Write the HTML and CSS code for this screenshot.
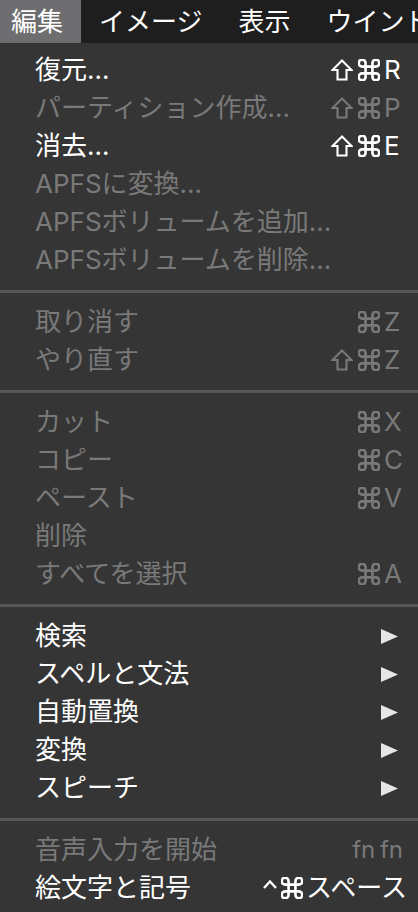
FILE: index.html
```html
<!DOCTYPE html>
<html lang="ja">
<head>
<meta charset="utf-8">
<title>編集メニュー</title>
<link rel="stylesheet" href="styles.css">
</head>
<body>
<div class="menubar">
  <div class="mb-item active">編集</div>
  <div class="mb-item">イメージ</div>
  <div class="mb-item">表示</div>
  <div class="mb-item">ウインドウ</div>
</div>

<div class="menu">
  <div class="row">
    <span class="label">復元…</span>
    <span class="keys">
      <svg class="shift" viewBox="0 0 22 22"><path d="M11 1.5 L20.5 11 H15.5 V20.5 H6.5 V11 H1.5 Z"/></svg>
      <svg class="cmd" viewBox="2.4 2.4 19.2 19.2"><path d="M15 6v12a3 3 0 1 0 3-3H6a3 3 0 1 0 3 3V6a3 3 0 1 0-3 3h12a3 3 0 1 0-3-3"/></svg>
      <span class="key">R</span>
    </span>
  </div>
  <div class="row off">
    <span class="label">パーティション作成…</span>
    <span class="keys">
      <svg class="shift" viewBox="0 0 22 22"><path d="M11 1.5 L20.5 11 H15.5 V20.5 H6.5 V11 H1.5 Z"/></svg>
      <svg class="cmd" viewBox="2.4 2.4 19.2 19.2"><path d="M15 6v12a3 3 0 1 0 3-3H6a3 3 0 1 0 3 3V6a3 3 0 1 0-3 3h12a3 3 0 1 0-3-3"/></svg>
      <span class="key">P</span>
    </span>
  </div>
  <div class="row">
    <span class="label">消去…</span>
    <span class="keys">
      <svg class="shift" viewBox="0 0 22 22"><path d="M11 1.5 L20.5 11 H15.5 V20.5 H6.5 V11 H1.5 Z"/></svg>
      <svg class="cmd" viewBox="2.4 2.4 19.2 19.2"><path d="M15 6v12a3 3 0 1 0 3-3H6a3 3 0 1 0 3 3V6a3 3 0 1 0-3 3h12a3 3 0 1 0-3-3"/></svg>
      <span class="key">E</span>
    </span>
  </div>
  <div class="row off"><span class="label">APFSに変換…</span></div>
  <div class="row off"><span class="label">APFSボリュームを追加…</span></div>
  <div class="row off"><span class="label">APFSボリュームを削除…</span></div>

  <div class="sep"></div>

  <div class="row off">
    <span class="label">取り消す</span>
    <span class="keys">
      <svg class="cmd" viewBox="2.4 2.4 19.2 19.2"><path d="M15 6v12a3 3 0 1 0 3-3H6a3 3 0 1 0 3 3V6a3 3 0 1 0-3 3h12a3 3 0 1 0-3-3"/></svg>
      <span class="key">Z</span>
    </span>
  </div>
  <div class="row off">
    <span class="label">やり直す</span>
    <span class="keys">
      <svg class="shift" viewBox="0 0 22 22"><path d="M11 1.5 L20.5 11 H15.5 V20.5 H6.5 V11 H1.5 Z"/></svg>
      <svg class="cmd" viewBox="2.4 2.4 19.2 19.2"><path d="M15 6v12a3 3 0 1 0 3-3H6a3 3 0 1 0 3 3V6a3 3 0 1 0-3 3h12a3 3 0 1 0-3-3"/></svg>
      <span class="key">Z</span>
    </span>
  </div>

  <div class="sep"></div>

  <div class="row off">
    <span class="label">カット</span>
    <span class="keys">
      <svg class="cmd" viewBox="2.4 2.4 19.2 19.2"><path d="M15 6v12a3 3 0 1 0 3-3H6a3 3 0 1 0 3 3V6a3 3 0 1 0-3 3h12a3 3 0 1 0-3-3"/></svg>
      <span class="key">X</span>
    </span>
  </div>
  <div class="row off">
    <span class="label">コピー</span>
    <span class="keys">
      <svg class="cmd" viewBox="2.4 2.4 19.2 19.2"><path d="M15 6v12a3 3 0 1 0 3-3H6a3 3 0 1 0 3 3V6a3 3 0 1 0-3 3h12a3 3 0 1 0-3-3"/></svg>
      <span class="key">C</span>
    </span>
  </div>
  <div class="row off">
    <span class="label">ペースト</span>
    <span class="keys">
      <svg class="cmd" viewBox="2.4 2.4 19.2 19.2"><path d="M15 6v12a3 3 0 1 0 3-3H6a3 3 0 1 0 3 3V6a3 3 0 1 0-3 3h12a3 3 0 1 0-3-3"/></svg>
      <span class="key">V</span>
    </span>
  </div>
  <div class="row off"><span class="label">削除</span></div>
  <div class="row off">
    <span class="label">すべてを選択</span>
    <span class="keys">
      <svg class="cmd" viewBox="2.4 2.4 19.2 19.2"><path d="M15 6v12a3 3 0 1 0 3-3H6a3 3 0 1 0 3 3V6a3 3 0 1 0-3 3h12a3 3 0 1 0-3-3"/></svg>
      <span class="key">A</span>
    </span>
  </div>

  <div class="sep"></div>

  <div class="row"><span class="label">検索</span><svg class="arrow" viewBox="0 0 17 15"><polygon points="0,0 17,7.5 0,15"/></svg></div>
  <div class="row"><span class="label">スペルと文法</span><svg class="arrow" viewBox="0 0 17 15"><polygon points="0,0 17,7.5 0,15"/></svg></div>
  <div class="row"><span class="label">自動置換</span><svg class="arrow" viewBox="0 0 17 15"><polygon points="0,0 17,7.5 0,15"/></svg></div>
  <div class="row"><span class="label">変換</span><svg class="arrow" viewBox="0 0 17 15"><polygon points="0,0 17,7.5 0,15"/></svg></div>
  <div class="row"><span class="label">スピーチ</span><svg class="arrow" viewBox="0 0 17 15"><polygon points="0,0 17,7.5 0,15"/></svg></div>

  <div class="sep"></div>

  <div class="row off">
    <span class="label">音声入力を開始</span>
    <span class="keys"><span class="fn">fn fn</span></span>
  </div>
  <div class="row">
    <span class="label">絵文字と記号</span>
    <span class="keys wide">
      <svg class="caret" viewBox="0 0 16 20"><polyline points="2,10 8,3.5 14,10"/></svg>
      <svg class="cmd" viewBox="2.4 2.4 19.2 19.2"><path d="M15 6v12a3 3 0 1 0 3-3H6a3 3 0 1 0 3 3V6a3 3 0 1 0-3 3h12a3 3 0 1 0-3-3"/></svg>
      <span class="space">スペース</span>
    </span>
  </div>
</div>
</body>
</html>
```

FILE: styles.css
```css
html, body {
  margin: 0;
  padding: 0;
}

body {
  width: 418px;
  height: 912px;
  overflow: hidden;
  background: #353535;
  font-family: "Inter", "Noto Sans CJK JP", sans-serif;
  color: #ffffff;
}

.menubar {
  display: flex;
  height: 43px;
  margin-left: -7px;
  background: #1e1e1e;
  white-space: nowrap;
  overflow: hidden;
}

.mb-item {
  padding: 0 18px;
  font-size: 26px;
  line-height: 43px;
  color: #ffffff;
  flex: none;
}

.mb-item.active {
  background: #6e6e70;
}

.menu {
  padding: 8px 15px 0 35px;
}

.row {
  display: flex;
  align-items: center;
  justify-content: space-between;
  height: 38px;
  font-size: 26px;
  color: #ffffff;
  white-space: nowrap;
}

.row.off {
  color: #797979;
}

.label {
  line-height: 38px;
}

.keys {
  display: flex;
  align-items: center;
  gap: 5px;
}

.keys.wide {
  margin-right: -4px;
  gap: 3px;
}

.key {
  width: 19px;
  margin-left: -1px;
  text-align: left;
  line-height: 38px;
}

.space {
  line-height: 38px;
}

.fn {
  line-height: 38px;
  font-size: 24px;
  word-spacing: -2px;
}

.shift {
  width: 22px;
  height: 22px;
  fill: none;
  stroke: currentColor;
  stroke-width: 2.1;
  stroke-linejoin: miter;
}

.cmd {
  width: 22px;
  height: 22px;
  fill: none;
  stroke: currentColor;
  stroke-width: 2.3;
}

.caret {
  width: 16px;
  height: 20px;
  fill: none;
  stroke: currentColor;
  stroke-width: 2.4;
  stroke-linejoin: miter;
}

.arrow {
  width: 17px;
  height: 15px;
  margin-right: 5px;
  fill: #e6e6e6;
}

.sep {
  height: 3px;
  margin: 11px -15px 10px -35px;
  background: #575757;
}
```
